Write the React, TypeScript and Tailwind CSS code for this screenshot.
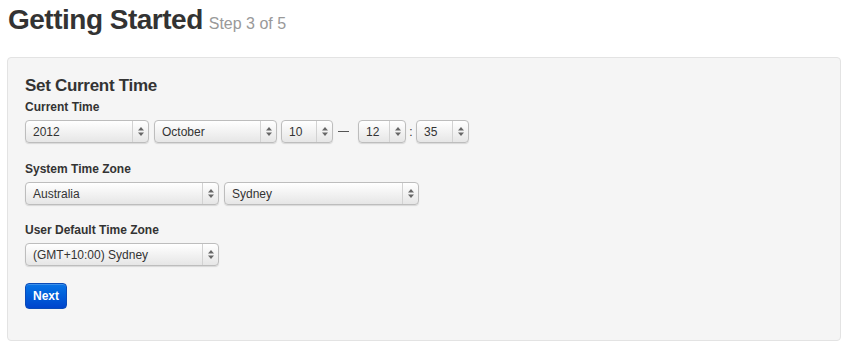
import React from 'react';

const font = { fontFamily: '"Liberation Sans", Arial, sans-serif' };

const Arrows = () => (
  <svg width="6" height="9" viewBox="0 0 6 9">
    <path d="M3 0 L6 3.5 L0 3.5 Z" fill="#666" />
    <path d="M3 9 L6 5.5 L0 5.5 Z" fill="#666" />
  </svg>
);

interface SelectBoxProps {
  value: string;
  width: string;
}

const SelectBox: React.FC<SelectBoxProps> = ({ value, width }) => {
  return (
    <div
      className={`${width} h-[23px] flex items-stretch rounded-[4px] border border-[#bdbdbd] bg-gradient-to-b from-white to-[#e6e6e6] shadow-[0_1px_1px_rgba(0,0,0,0.12)]`}
    >
      <div className="flex-1 flex items-center pl-[7px] text-[12px] text-[#333]">
        {value}
      </div>
      <div className="w-[16px] flex items-center justify-center border-l border-[#d2d2d2]">
        <Arrows />
      </div>
    </div>
  );
};

export default function App() {
  return (
    <div className="w-[850px] h-[357px] bg-white px-[7px] pt-[2px]" style={font}>
      {/* Header */}
      <h1 className="flex items-baseline leading-[36px] pl-[1px]">
        <span className="text-[28px] font-bold text-[#333] tracking-[-0.5px]">
          Getting Started
        </span>
        <span className="ml-[6px] text-[16px] text-[#999]">Step 3 of 5</span>
      </h1>

      {/* Panel */}
      <div className="mt-[15px] w-[834px] h-[284px] rounded-[4px] border border-[#e3e3e3] bg-[#f5f5f5] pl-[17px] pt-[18px]">
        <h2 className="text-[17px] font-bold leading-[20px] text-[#333] tracking-[-0.3px]">
          Set Current Time
        </h2>

        <div className="mt-[3px] text-[12px] font-bold leading-[16px] text-[#333]">
          Current Time
        </div>
        <div className="mt-[5px] flex items-center">
          <SelectBox value="2012" width="w-[124px]" />
          <div className="w-[5px]" />
          <SelectBox value="October" width="w-[123px]" />
          <div className="w-[4px]" />
          <SelectBox value="10" width="w-[52px]" />
          <div className="w-[25px] flex">
            <div className="ml-[5px] w-[11px] h-[1px] bg-[#555]" />
          </div>
          <SelectBox value="12" width="w-[48px]" />
          <div className="w-[10px] flex justify-center text-[12px] text-[#333]">:</div>
          <SelectBox value="35" width="w-[53px]" />
        </div>

        <div className="mt-[18px] text-[12px] font-bold leading-[16px] text-[#333]">
          System Time Zone
        </div>
        <div className="mt-[5px] flex items-center gap-[5px]">
          <SelectBox value="Australia" width="w-[194px]" />
          <SelectBox value="Sydney" width="w-[195px]" />
        </div>

        <div className="mt-[17px] text-[12px] font-bold leading-[16px] text-[#333]">
          User Default Time Zone
        </div>
        <div className="mt-[5px] flex">
          <SelectBox value="(GMT+10:00) Sydney" width="w-[194px]" />
        </div>

        <button className="mt-[17px] h-[26px] px-[7px] rounded-[4px] border border-[#0a4bb8] bg-gradient-to-b from-[#0a74e6] to-[#0044cc] text-[12px] font-bold text-white shadow-[inset_0_1px_0_rgba(255,255,255,0.2)]">
          Next
        </button>
      </div>
    </div>
  );
}
